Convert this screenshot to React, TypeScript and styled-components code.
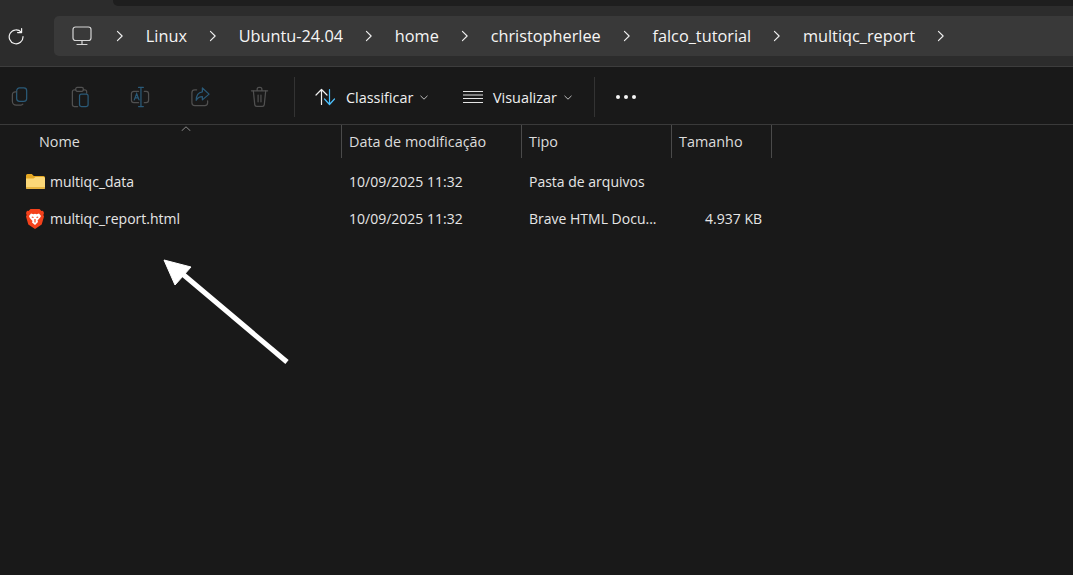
import React from 'react';
import styled, { createGlobalStyle } from 'styled-components';

const crumbs = ['Linux', 'Ubuntu-24.04', 'home', 'christopherlee', 'falco_tutorial', 'multiqc_report'];

const columns = [
  { label: 'Nome', width: 342 },
  { label: 'Data de modificação', width: 180 },
  { label: 'Tipo', width: 150 },
  { label: 'Tamanho', width: 100 },
];

const App = () => {
  return (
    <Window>
      <GlobalStyle />
      <TitleArea>
        <TabEdge />
        <NavRow>
          <RefreshButton>
            <svg width="18" height="18" viewBox="0 0 18 18" fill="none" stroke="#f2f2f2" strokeWidth="1.2" strokeLinecap="round" strokeLinejoin="round">
              <path d="M14.2 5.2A6.9 6.9 0 1 0 16 9.6" />
              <path d="M14.6 1.6v4h-4" />
            </svg>
          </RefreshButton>
          <AddressBar>
            <MonitorSlot>
              <MonitorIcon />
            </MonitorSlot>
            <Chevron />
            {crumbs.map((crumb) => (
              <Crumb key={crumb}>
                <CrumbText>{crumb}</CrumbText>
                <Chevron />
              </Crumb>
            ))}
          </AddressBar>
        </NavRow>
      </TitleArea>

      <Toolbar>
        <ToolGroup>
          <ToolIcon>
            <rect x="7" y="1.5" width="10.5" height="14" rx="3" stroke="#2a5a78" />
            <path d="M7 5.5H5.5A3 3 0 0 0 2.5 8.5v7a4 4 0 0 0 4 4h5a3 3 0 0 0 2-1" stroke="#505050" />
          </ToolIcon>
          <ToolIcon>
            <path d="M6 3.5H4.5a2 2 0 0 0-2 2V19a2 2 0 0 0 2 2H8M14 3.5h1.5a2 2 0 0 1 2 2V7" stroke="#505050" />
            <rect x="6" y="1" width="8" height="4" rx="1.5" stroke="#505050" />
            <rect x="10" y="8" width="9" height="13" rx="2" stroke="#2a5a78" />
          </ToolIcon>
          <ToolIcon>
            <path d="M9 5H4a2.5 2.5 0 0 0-2.5 2.5v7A2.5 2.5 0 0 0 4 17h5M15 5h2a2.5 2.5 0 0 1 2.5 2.5v7A2.5 2.5 0 0 1 17 17h-2" stroke="#505050" />
            <path d="M9 1h5M9 21h5M11.5 1v20" stroke="#2a5a78" />
            <path d="M4.5 14 7 7.5 9.5 14M5.5 12h3" stroke="#2a5a78" />
          </ToolIcon>
          <ToolIcon>
            <path d="M7 3.5H5a3 3 0 0 0-3 3V17a3 3 0 0 0 3 3h10.5a3 3 0 0 0 3-3v-2" stroke="#505050" />
            <path d="M13 1.5 20 8l-7 6v-3.5c-3 0-5 1-6.5 4 0-5 2.5-8.5 6.5-9z" stroke="#2a5a78" strokeLinejoin="round" />
          </ToolIcon>
          <ToolIcon>
            <path d="M1.5 4.5h17M7.5 4.5V3a2 2 0 0 1 2-2h1a2 2 0 0 1 2 2v1.5" stroke="#505050" />
            <path d="M3.5 4.5 5 19a2 2 0 0 0 2 1.8h6a2 2 0 0 0 2-1.8l1.5-14.5M8.5 9v7M11.5 9v7" stroke="#505050" />
          </ToolIcon>
        </ToolGroup>
        <ToolDivider />
        <MenuButton $width={148}>
          <svg width="21" height="18" viewBox="0 0 21 18" fill="none" strokeWidth="1.2" strokeLinecap="round" strokeLinejoin="round">
            <path d="M6.5 16.5V1.5M1 7l5.5-5.5L12 7" stroke="#f0f0f0" />
            <path d="M14.5 1.5v15M9.5 11l5 5.5 5-5.5" stroke="#4cc2ff" />
          </svg>
          <MenuLabel>Classificar</MenuLabel>
          <Caret />
        </MenuButton>
        <MenuButton $width={151}>
          <svg width="20" height="14" viewBox="0 0 20 14" fill="none" stroke="#e4e4e4" strokeWidth="1">
            <path d="M0 1.5h20M0 5h20M0 8.5h20M0 12.5h20" />
          </svg>
          <MenuLabel>Visualizar</MenuLabel>
          <Caret />
        </MenuButton>
        <ToolDivider />
        <MoreDots>
          <Dot />
          <Dot />
          <Dot />
        </MoreDots>
      </Toolbar>

      <HeaderRow>
        <SortCaret viewBox="0 0 10 5" fill="none" stroke="#8a8a8a" strokeWidth="1">
          <path d="M.5 5 5 .8 9.5 5" />
        </SortCaret>
        {columns.map((column, index) => (
          <HeaderCell key={column.label} $width={column.width} $first={index === 0}>
            {column.label}
          </HeaderCell>
        ))}
      </HeaderRow>

      <FileList>
        <FileRow>
          <NameCell>
            <IconSlot>
              <FolderIcon />
            </IconSlot>
            <span>multiqc_data</span>
          </NameCell>
          <Cell>10/09/2025 11:32</Cell>
          <Cell>Pasta de arquivos</Cell>
          <SizeCell />
        </FileRow>
        <FileRow>
          <NameCell>
            <IconSlot>
              <BraveIcon />
            </IconSlot>
            <span>multiqc_report.html</span>
          </NameCell>
          <Cell>10/09/2025 11:32</Cell>
          <Cell>Brave HTML Docu...</Cell>
          <SizeCell>4.937 KB</SizeCell>
        </FileRow>
      </FileList>

      <PointerArrow viewBox="0 0 130 110">
        <path d="M125 104 17 13" stroke="#fff" strokeWidth="5" />
        <path d="M2 2 29 9 13 27z" fill="#fff" stroke="#fff" strokeWidth="1" strokeLinejoin="round" />
      </PointerArrow>
    </Window>
  );
};

const MonitorIcon = () => (
  <svg width="20" height="20" viewBox="0 0 20 20" fill="none" stroke="#d6d6d6" strokeWidth="1.2" strokeLinecap="round">
    <rect x="1" y="1" width="18" height="13.5" rx="2.5" />
    <path d="M10 14.5v3.5M5 18.5h10" />
  </svg>
);

const Chevron = () => (
  <ChevronSvg viewBox="0 0 8 14" fill="none" stroke="#f0f0f0" strokeWidth="1.3" strokeLinecap="round" strokeLinejoin="round">
    <path d="M1 1.5 6.5 7 1 12.5" />
  </ChevronSvg>
);

const Caret = () => (
  <CaretSvg viewBox="0 0 8 5" fill="none" stroke="#bdbdbd" strokeWidth="1">
    <path d="M.5.8 4 4.2 7.5.8" />
  </CaretSvg>
);

const FolderIcon = () => (
  <svg width="19" height="15" viewBox="0 0 19 15">
    <path d="M0 1.5A1.5 1.5 0 0 1 1.5 0h4.3l2 2H17.5A1.5 1.5 0 0 1 19 3.5V5H0z" fill="#e5a823" />
    <path d="M0 4.5h7.5l2-1.5h8A1.5 1.5 0 0 1 19 4.5v9a1.5 1.5 0 0 1-1.5 1.5h-16A1.5 1.5 0 0 1 0 13.5z" fill="#fbd878" />
    <path d="M0 13.5A1.5 1.5 0 0 0 1.5 15h16a1.5 1.5 0 0 0 1.5-1.5V13H0z" fill="#e8b540" />
  </svg>
);

const BraveIcon = () => (
  <svg width="18" height="20" viewBox="0 0 18 20">
    <path d="M4.5 0h9L15.5 2 17 1.800 18 4l-.6 2 .6 1.500-2.300 8L10.500 19 9 20l-1.500-1-5.200-3.500L0 7.500.6 6 0 4l1-2.200L2.500 2z" fill="#f4411b" />
    <path d="M5 4.500 7.500 5.200 9 4.700l1.500.5 2.500-.7 2 2.500-.8 1.500-2.700 3 .5 1.500L9 16l-3-2.500.5-1.500-2.700-3L3 7z" fill="#fff" />
    <path d="M7.500 8.500 5.800 8M10.500 8.500l1.700-.5M9 10v3.500" stroke="#f4411b" strokeWidth="1.200" fill="none" />
  </svg>
);

const GlobalStyle = createGlobalStyle`
  html, body {
    margin: 0;
    padding: 0;
    background: #191919;
  }

  * {
    box-sizing: border-box;
  }
`;

const Window = styled.div`
  position: relative;
  width: 1073px;
  height: 575px;
  overflow: hidden;
  background: #191919;
  color: #fff;
  font-family: 'Open Sans', 'Noto Sans', sans-serif;
`;

const TitleArea = styled.div`
  height: 67px;
  background: #2c2c2c;
  border-bottom: 1px solid #3d3d3d;
`;

const TabEdge = styled.div`
  height: 6px;
  margin-left: 113px;
  background: #1e1e1e;
  border-bottom-left-radius: 5px;
`;

const NavRow = styled.div`
  display: flex;
  align-items: center;
  height: 40px;
  margin-top: 10px;
`;

const RefreshButton = styled.div`
  display: flex;
  align-items: center;
  justify-content: center;
  width: 54px;
  padding-right: 22px;
`;

const AddressBar = styled.div`
  flex: 1;
  display: flex;
  align-items: center;
  height: 40px;
  padding-left: 18px;
  background: #393939;
  border-radius: 5px 0 0 5px;
`;

const MonitorSlot = styled.div`
  display: flex;
  margin-right: 2px;
`;

const Crumb = styled.div`
  display: flex;
  align-items: center;
`;

const CrumbText = styled.span`
  margin-left: 21.8px;
  font-size: 16.3px;
  color: #f5f5f5;
  white-space: nowrap;
`;

const ChevronSvg = styled.svg`
  flex: none;
  width: 8px;
  height: 12px;
  margin-left: 22px;
`;

const Toolbar = styled.div`
  display: flex;
  align-items: center;
  height: 58px;
  padding: 3px 0 0 10px;
  background: #191919;
  border-bottom: 1px solid #3a3a3a;
`;

const ToolGroup = styled.div`
  display: flex;
  gap: 40px;
  padding-right: 24px;
`;

const ToolIconSvg = styled.svg`
  flex: none;
  width: 20px;
  height: 22px;
`;

const ToolIcon = ({ children }: { children: React.ReactNode }) => (
  <ToolIconSvg viewBox="0 0 21 22" fill="none" strokeWidth="1.3" strokeLinecap="round">
    {children}
  </ToolIconSvg>
);

const ToolDivider = styled.div`
  flex: none;
  width: 1px;
  height: 40px;
  background: #333;
`;

const MenuButton = styled.div<{ $width: number }>`
  flex: none;
  display: flex;
  align-items: center;
  width: ${(p) => p.$width}px;
  padding-left: 20px;
`;

const MenuLabel = styled.span`
  margin-left: 10px;
  font-size: 14.4px;
  color: #f0f0f0;
`;

const CaretSvg = styled.svg`
  width: 8px;
  height: 5px;
  margin-left: 7px;
`;

const MoreDots = styled.div`
  display: flex;
  gap: 4px;
  margin-left: 21px;
`;

const Dot = styled.span`
  width: 4px;
  height: 4px;
  border-radius: 50%;
  background: #f5f5f5;
`;

const HeaderRow = styled.div`
  position: relative;
  display: flex;
  height: 33px;
`;

const SortCaret = styled.svg`
  position: absolute;
  left: 181px;
  top: 1px;
  width: 10px;
  height: 5px;
`;

const HeaderCell = styled.div<{ $width: number; $first: boolean }>`
  flex: none;
  width: ${(p) => p.$width}px;
  padding-left: ${(p) => (p.$first ? 39 : 7)}px;
  padding-top: 7px;
  font-size: 14.4px;
  line-height: 20px;
  color: #dcdcdc;
  border-right: 1px solid #4a4a4a;
`;

const FileList = styled.div`
  padding-top: 5px;
`;

const FileRow = styled.div`
  display: grid;
  grid-template-columns: 342px 180px 150px 90px;
  align-items: center;
  height: 37px;
  font-size: 14px;
  color: #e6e6e6;
`;

const Cell = styled.div`
  padding-left: 7px;
  white-space: nowrap;
`;

const NameCell = styled.div`
  display: flex;
  align-items: center;
  gap: 5px;
  padding-left: 26px;
`;

const IconSlot = styled.div`
  flex: none;
  display: flex;
  width: 19px;
`;

const SizeCell = styled.div`
  text-align: right;
`;

const PointerArrow = styled.svg`
  position: absolute;
  left: 162px;
  top: 258px;
  width: 130px;
  height: 110px;
`;

export default App;
